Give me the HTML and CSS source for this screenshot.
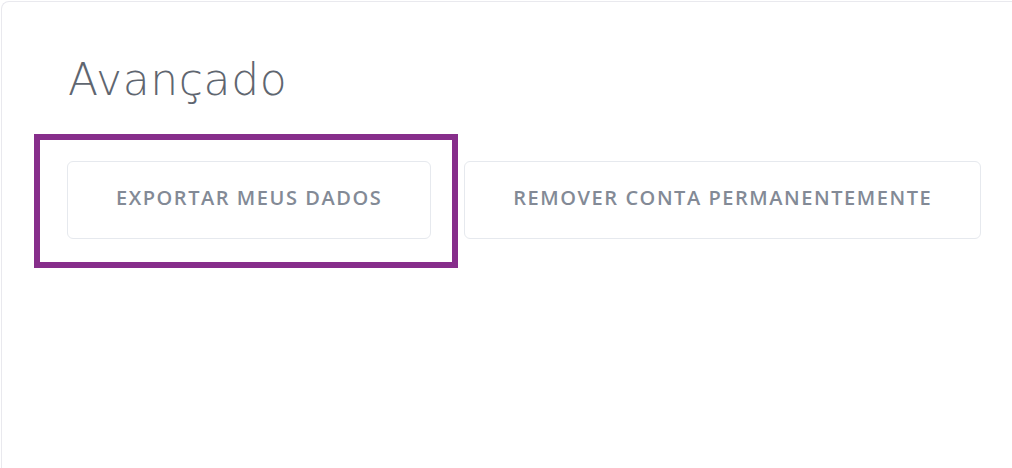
FILE: index.html
```html
<!DOCTYPE html>
<html lang="pt">
<head>
  <meta charset="UTF-8">
  <meta name="viewport" content="width=device-width, initial-scale=1">
  <title>Avançado</title>
  <link rel="stylesheet" href="styles.css">
</head>
<body>
  <div class="card">
    <h2>Avançado</h2>

    <div class="actions">
      <div class="highlighted">
        <button class="action-btn">Exportar meus dados</button>
        <span class="highlight-box"></span>
      </div>
      <button class="action-btn">Remover conta permanentemente</button>
    </div>
  </div>
</body>
</html>
```

FILE: styles.css
```css
html, body {
  height: 100%;
}
body {
  font-family: "Open Sans", "Liberation Sans", Arial, sans-serif;
  margin: 0;
  padding: 1px 0 0 1px;
  background-color: #ffffff;
  box-sizing: border-box;
  overflow: hidden;
}
.card {
  border: 1px solid #e9e9ee;
  border-right: none;
  border-bottom: none;
  border-radius: 8px 0 0 0;
  padding: 56px 0 0 65px;
  height: 100%;
  box-sizing: border-box;
}
h2 {
  margin: 0 0 0 1px;
  color: #5f6670;
  font-family: "DejaVu Sans", sans-serif;
  font-size: 44px;
  font-weight: 200;
  line-height: 44px;
  letter-spacing: 0.6px;
}
.actions {
  display: flex;
  gap: 33px;
  margin-top: 59px;
}
.highlighted {
  position: relative;
}
.action-btn {
  height: 78px;
  padding: 0 48px 5px;
  background: #fff;
  border: 1px solid #e6e9ee;
  border-radius: 6px;
  color: #838a96;
  font-family: inherit;
  font-size: 20px;
  font-weight: 600;
  text-transform: uppercase;
  letter-spacing: 1.55px;
}
.highlight-box {
  position: absolute;
  left: -33px;
  top: -27px;
  right: -27px;
  bottom: -29px;
  border: 6px solid #872e8b;
  pointer-events: none;
}
```
